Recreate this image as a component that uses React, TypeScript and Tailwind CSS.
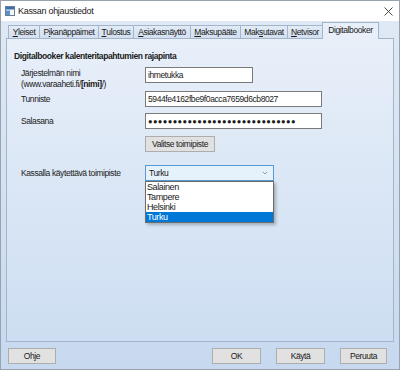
import { ChevronDown } from 'lucide-react';

const tabs = [
  { pre: '', key: 'Y', post: 'leiset', w: 'w-[32px]' },
  { pre: 'P', key: 'i', post: 'kanäppäimet', w: 'w-[60px]' },
  { pre: '', key: 'T', post: 'ulostus', w: 'w-[36px]' },
  { pre: '', key: 'A', post: 'siakasnäyttö', w: 'w-[58px]' },
  { pre: '', key: 'M', post: 'aksupääte', w: 'w-[51px]' },
  { pre: 'Mak', key: 's', post: 'utavat', w: 'w-[48px]' },
  { pre: '', key: 'N', post: 'etvisor', w: 'w-[36px]' },
];

const places = ['Salainen', 'Tampere', 'Helsinki', 'Turku'];

const WinButton = ({ label, width }: { label: string; width: string }) => (
  <div className={`${width} flex h-[16px] items-center justify-center border border-[#adadad] bg-[#e1e1e1] text-[#1a1a1a]`}>
    {label}
  </div>
);

const TextBox = ({ width, children }: { width: string; children: React.ReactNode }) => (
  <div className={`${width} flex h-[16px] items-center overflow-hidden border border-[#7a7a7a] bg-white px-[2px] text-[#1a1a1a]`}>
    {children}
  </div>
);

export default function App() {
  return (
    <div
      className="flex h-[370px] w-[400px] flex-col overflow-hidden border border-[#9aa3ad] bg-white text-[8.5px] leading-[11px] tracking-[-0.4px] text-[#1a1a1a]"
      style={{ fontFamily: '"Liberation Sans", Arial, sans-serif' }}
    >
      {/* title bar */}
      <div className="flex h-[20px] items-center bg-white pl-[4px] pr-[6px]">
        <svg width="10" height="10" viewBox="0 0 10 10" className="mr-[3px]">
          <rect x="0.5" y="0.5" width="9" height="9" fill="#f4f6f8" stroke="#6b7d93" />
          <rect x="1" y="1" width="8" height="2.5" fill="#3b6fb0" />
          <rect x="1" y="4.5" width="4" height="4.5" fill="#5d8fcf" />
        </svg>
        <span className="text-[9px] tracking-[-0.3px]">Kassan ohjaustiedot</span>
        <svg width="9" height="9" viewBox="0 0 9 9" className="ml-auto">
          <path d="M0.5 0.5 L8.5 8.5 M8.5 0.5 L0.5 8.5" stroke="#333" strokeWidth="0.9" />
        </svg>
      </div>

      {/* body */}
      <div className="flex flex-1 flex-col bg-gradient-to-b from-[#dfe9f5] to-[#c7d9ef] px-[5px]">
        {/* tab strip */}
        <div className="mt-[1px] flex h-[16px] items-end pl-[2px]">
          {tabs.map((t) => (
            <div
              key={t.post}
              className={`${t.w} -mr-px flex h-[13px] items-center justify-center border border-b-0 border-[#a3b5ca] bg-gradient-to-b from-[#e2ebf6] to-[#d3e0ef] leading-none`}
            >
              {t.pre}
              <span className="underline">{t.key}</span>
              {t.post}
            </div>
          ))}
          <div className="relative z-10 -mb-px flex h-[17px] w-[57px] items-center justify-center border border-b-0 border-[#a3b5ca] bg-[#e8eff9] pb-[2px] leading-none">
            Digitalbooker
          </div>
        </div>

        {/* page */}
        <div className="relative flex h-[304px] flex-col border border-[#a3b5ca] bg-gradient-to-b from-[#e8eff9] to-[#cddef2] pl-[7px] pt-[11px]">
          <div className="font-bold leading-[12px]">Digitalbooker kalenteritapahtumien rajapinta</div>

          <div className="mt-[5px] flex flex-col pl-[7px]">
            <div className="flex h-[24px] items-start">
              <div className="w-[124px] pt-[1px] leading-[11px]">
                <div>Järjestelmän nimi</div>
                <div>
                  (www.varaaheti.fi/<span className="font-bold">[nimi]</span>/)
                </div>
              </div>
              <TextBox width="w-[108px]">ihmetukka</TextBox>
            </div>
            <div className="flex h-[22px] items-start">
              <div className="flex h-[16px] w-[124px] items-center">Tunniste</div>
              <TextBox width="w-[177px]">5944fe4162fbe9f0acca7659d6cb8027</TextBox>
            </div>
            <div className="flex h-[23px] items-start">
              <div className="flex h-[16px] w-[124px] items-center">Salasana</div>
              <TextBox width="w-[177px]">
                <span className="text-[7.5px] tracking-[0.4px]">{'●'.repeat(30)}</span>
              </TextBox>
            </div>
            <div className="flex items-start pl-[124px]">
              <WinButton label="Valitse toimipiste" width="w-[70px]" />
            </div>

            <div className="mt-[13px] flex items-start">
              <div className="flex h-[16px] w-[124px] items-center">Kassalla käytettävä toimipiste</div>
              <div className="relative">
                <div className="flex h-[16px] w-[129px] items-center justify-between border border-[#5b9bd5] bg-[#e5f1fb] pl-[3px] pr-[4px]">
                  <span>Turku</span>
                  <ChevronDown size={8} strokeWidth={1.5} color="#444" />
                </div>
                <div className="absolute left-0 top-[16px] z-20 flex w-[129px] flex-col border border-[#6b6b6b] bg-white shadow-[2px_2px_3px_rgba(0,0,0,0.25)]">
                  {places.map((p) => (
                    <div
                      key={p}
                      className={`h-[10px] pl-[1px] text-[9px] leading-[10px] ${p === 'Turku' ? 'bg-[#0078d7] text-white' : ''}`}
                    >
                      {p}
                    </div>
                  ))}
                </div>
              </div>
            </div>
          </div>
        </div>

        {/* bottom buttons */}
        <div className="mt-[6px] flex items-center pl-[2px] pr-[7px]">
          <WinButton label="Ohje" width="w-[48px]" />
          <div className="ml-auto flex gap-[15px]">
            <WinButton label="OK" width="w-[49px]" />
            <WinButton label="Käytä" width="w-[49px]" />
            <WinButton label="Peruuta" width="w-[47px]" />
          </div>
        </div>
      </div>
    </div>
  );
}
